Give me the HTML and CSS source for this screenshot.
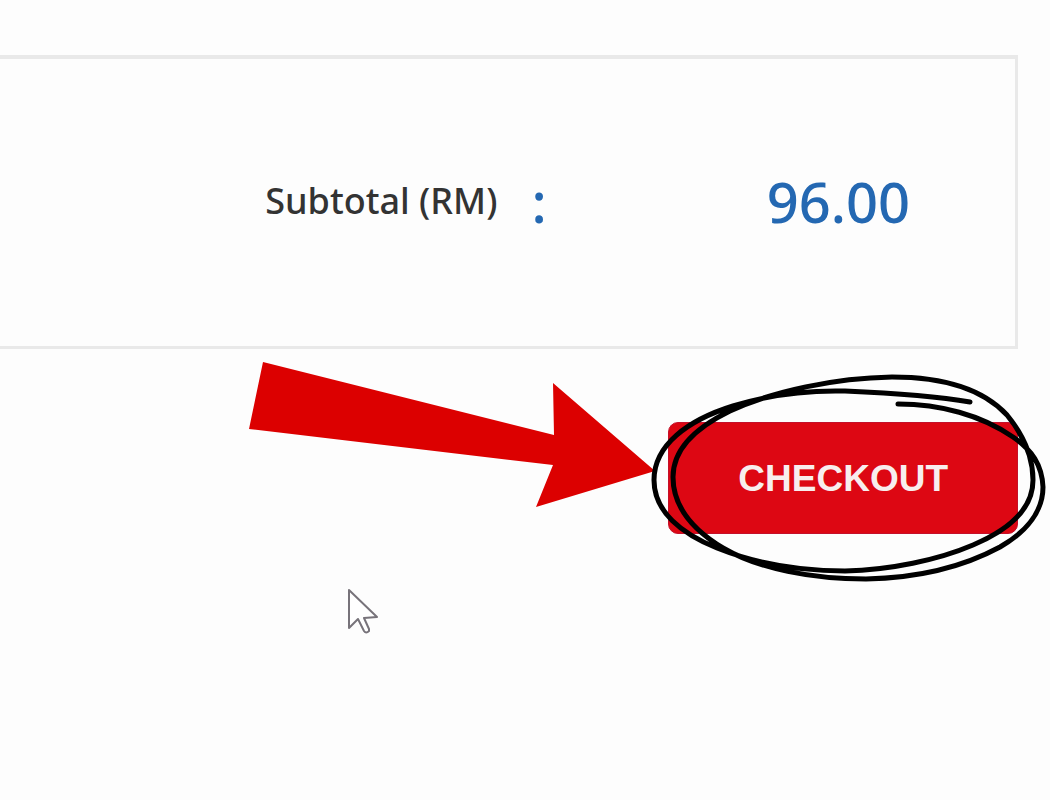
FILE: index.html
```html
<!DOCTYPE html>
<html lang="en">
<head>
  <meta charset="UTF-8">
  <title>Checkout</title>
  <link rel="stylesheet" href="styles.css">
</head>
<body>

  <!-- SUBTOTAL -->
  <section class="summary">
    <span class="label">Subtotal (RM)</span>
    <span class="colon">:</span>
    <span class="amount">96.00</span>
  </section>

  <!-- CHECKOUT -->
  <div class="actions">
    <button class="checkout" type="button">CHECKOUT</button>

    <svg class="marks" viewBox="240 355 810 290" aria-hidden="true">
      <!-- arrow -->
      <path fill="#dc0000" d="M263 362 L554 435 L553 383 L655 471 L536 507 L553 465 L249 429 Z"/>
      <!-- hand drawn circle -->
      <path fill="none" stroke="#000" stroke-width="5" stroke-linecap="round" stroke-linejoin="round" d="M970 402
        C935 396 890 393 845 391
        C804 390 768 395 733 406
        C688 420 654 445 654 480
        C654 512 682 534 717 548
        C757 564 800 571 845 571
        C890 570 938 560 973 545
        C1011 529 1033 507 1033 480
        C1033 460 1025 437 1007 415
        C982 388 942 377 892 377
        C835 378 773 391 730 411
        C695 428 673 450 673 477
        C673 506 693 530 723 548
        C759 569 812 579 866 579
        C916 578 963 567 1000 547
        C1028 531 1043 510 1043 487
        C1042 465 1032 450 1013 437
        C981 415 940 404 898 404"/>
      <!-- mouse pointer -->
      <path fill="#fff" stroke="#77737a" stroke-width="2" stroke-linejoin="round" d="M349 590 L349 628 L358 619 L364 631 Q366 634 369 631 L369 629 L364 618 L377 617 Z"/>
    </svg>
  </div>

</body>
</html>
```
FILE: styles.css
```css
* {
  box-sizing: border-box;
}

body {
  margin: 0;
  padding: 55px 32px 0 0;
  min-height: 100vh;
  font-family: 'Noto Sans', sans-serif;
  background: #fdfdfd;
  color: #333;
  overflow-x: hidden;
}

.summary {
  display: flex;
  justify-content: flex-end;
  align-items: center;
  padding: 102px 105px 105px 0;
  border: 3px solid #e9e9e9;
  border-top-width: 4px;
  border-left: none;
  font-weight: 500;
  line-height: 80px;
}

.label {
  font-size: 36px;
}

.colon {
  margin-left: 34px;
  font-size: 56px;
  color: #2468b2;
}

.amount {
  margin-left: 220px;
  font-size: 56px;
  color: #2468b2;
}

.actions {
  position: relative;
  display: flex;
  justify-content: flex-end;
  margin-top: 73px;
}

.checkout {
  padding: 33px 69px 31px;
  border: 1px solid #c4102a;
  border-radius: 10px;
  background: #dd0713;
  color: #f8eeee;
  font-family: 'Liberation Sans', sans-serif;
  font-size: 37px;
  font-weight: bold;
  line-height: 46px;
  cursor: pointer;
}

.marks {
  position: absolute;
  top: -67px;
  right: -32px;
  width: 810px;
  height: 290px;
  pointer-events: none;
}
```
